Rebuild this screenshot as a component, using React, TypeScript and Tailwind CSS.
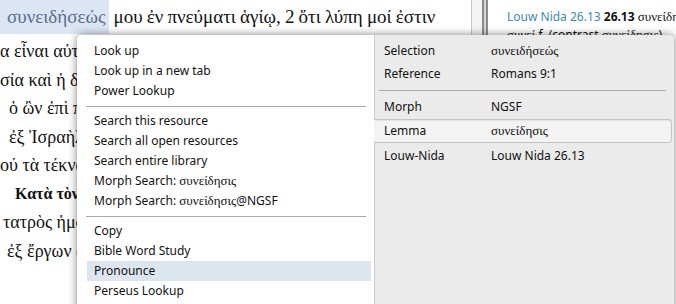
import React from "react";

const greek = { fontFamily: '"Liberation Serif", "DejaVu Serif", serif' };
const ui = { fontFamily: '"Noto Sans", "Open Sans", sans-serif' };

function MenuItem({ children, active }: { children: React.ReactNode; active?: boolean }) {
  return (
    <div
      className={`h-[20px] flex items-center pl-[7px] text-[12px] text-[#111] whitespace-nowrap ${
        active ? "bg-[#dde5ee]" : ""
      }`}
    >
      {children}
    </div>
  );
}

function Sep() {
  return (
    <div className="h-[10px] flex items-center -ml-px mr-[5px]">
      <div className="h-px w-full bg-[#a9a9a9]" />
    </div>
  );
}

function G({ children }: { children: React.ReactNode }) {
  return (
    <span style={greek} className="text-[13px]">
      {children}
    </span>
  );
}

function Row({ label, value, greekValue }: { label: string; value: string; greekValue?: boolean }) {
  return (
    <div className="h-[23px] flex items-center pl-[9px] text-[12px] text-[#111] whitespace-nowrap">
      <div className="w-[107px]">{label}</div>
      <div>{greekValue ? <G>{value}</G> : value}</div>
    </div>
  );
}

export default function App() {
  const lines: { text: string; pad: string; bold?: boolean }[] = [
    { text: "α εἶναι αὐτὸς ἐγὼ ἀπὸ τοῦ Χριστοῦ", pad: "pl-0" },
    { text: "σία καὶ ἡ δόξα καὶ αἱ διαθῆκαι", pad: "pl-0" },
    { text: "ὁ ὢν ἐπὶ πάντων θεὸς εὐλογητὸς", pad: "pl-[9px]" },
    { text: "ἐξ Ἰσραὴλ οὗτοι Ἰσραήλ", pad: "pl-[9px]" },
    { text: "ού τὰ τέκνα τοῦ θεοῦ", pad: "pl-0" },
    { text: "Κατὰ τὸν καιρὸν τοῦτον", pad: "pl-[15px] text-[16px]", bold: true },
    { text: "τατρὸς ἡμῶν", pad: "pl-[3px]" },
    { text: "ἐξ ἔργων ἀλλ᾽ ἐκ τοῦ καλοῦντος", pad: "pl-[7px]" },
  ];

  return (
    <div className="relative w-[676px] h-[304px] overflow-hidden bg-white">
      {/* background app */}
      <div className="flex h-full">
        <div className="w-[471px] h-full overflow-hidden text-[18px] text-[#111] whitespace-nowrap" style={greek}>
          <div className="h-[34px] flex items-stretch text-[19px]">
            <span className="bg-[#dbe5f3] text-[#5b6e8c] flex items-center pl-[7px] pr-[4px]">συνειδήσεώς</span>
            <span className="flex items-center justify-between w-[326px] pl-[4px]">
              <span>μου</span>
              <span>ἐν</span>
              <span>πνεύματι</span>
              <span>ἁγίῳ,</span>
              <span>2</span>
              <span>ὅτι</span>
              <span>λύπη</span>
              <span>μοί</span>
              <span>ἐστιν</span>
            </span>
          </div>
          <div className="pt-[3px]">
            {lines.map((l, i) => (
              <div key={i} className={`h-[28.5px] leading-[28.5px] ${l.pad} ${l.bold ? "font-bold" : ""}`}>
                {l.text}
              </div>
            ))}
          </div>
        </div>
        <div className="w-px h-full bg-[#c9c9c9]" />
        <div className="w-[10px] h-full bg-[#f4f4f4]" />
        <div className="w-[2px] h-full bg-[#8c8c8c]" />
        <div className="w-[2px] h-full bg-[#d4d4d4]" />
        <div className="w-[2px] h-full bg-[#8c8c8c]" />
        <div className="flex-1 h-full pl-[19px] pt-[9px] text-[12px] text-[#111] whitespace-nowrap overflow-hidden" style={ui}>
          <div className="h-[18px] leading-[16px]">
            <span className="text-[#3d89b6]">Louw Nida 26.13</span> <span className="font-bold">26.13</span>{" "}
            <G>συνείδησις</G>
          </div>
          <div className="h-[16px] leading-[16px]">
            <G>συνεί</G> f. (contrast <G>συνείδησις</G>)
          </div>
        </div>
      </div>

      {/* context menu */}
      <div
        className="absolute left-[77px] top-[35px] w-[597px] h-[290px] flex rounded-t-[5px] shadow-[0_0_8px_rgba(0,0,0,0.5)]"
        style={ui}
      >
        <div className="w-[297px] h-full bg-white rounded-tl-[5px] pt-[6px] pl-[10px] pr-[3px]">
          <MenuItem>Look up</MenuItem>
          <MenuItem>Look up in a new tab</MenuItem>
          <MenuItem>Power Lookup</MenuItem>
          <Sep />
          <MenuItem>Search this resource</MenuItem>
          <MenuItem>Search all open resources</MenuItem>
          <MenuItem>Search entire library</MenuItem>
          <MenuItem>
            Morph Search:&nbsp;<G>συνείδησις</G>
          </MenuItem>
          <MenuItem>
            Morph Search:&nbsp;<G>συνείδησις</G>@NGSF
          </MenuItem>
          <Sep />
          <MenuItem>Copy</MenuItem>
          <MenuItem>Bible Word Study</MenuItem>
          <MenuItem active>Pronounce</MenuItem>
          <MenuItem>Perseus Lookup</MenuItem>
        </div>
        <div className="w-[300px] h-full bg-[#ebebeb] border-l border-[#cdcdcd] rounded-tr-[5px] pt-[4px]">
          <Row label="Selection" value="συνειδήσεώς" greekValue />
          <Row label="Reference" value="Romans 9:1" />
          <div className="h-[10px] flex items-center pl-[4px] pr-[8px]">
            <div className="h-px w-full bg-[#a9a9a9]" />
          </div>
          <Row label="Morph" value="NGSF" />
          <div className="mt-px -ml-px mr-[2px] h-[24px] flex items-center pl-[10px] text-[12px] text-[#111] bg-[#f3f3f3] border border-l-0 border-[#c4c4c4] rounded-r-[4px] shadow-[inset_0_1px_1px_rgba(0,0,0,0.06)] whitespace-nowrap">
            <div className="w-[107px]">Lemma</div>
            <G>συνείδησις</G>
          </div>
          <div className="h-[26px] flex items-center pl-[9px] text-[12px] text-[#111] whitespace-nowrap">
            <div className="w-[107px]">Louw-Nida</div>
            <div>Louw Nida 26.13</div>
          </div>
        </div>
      </div>
    </div>
  );
}
